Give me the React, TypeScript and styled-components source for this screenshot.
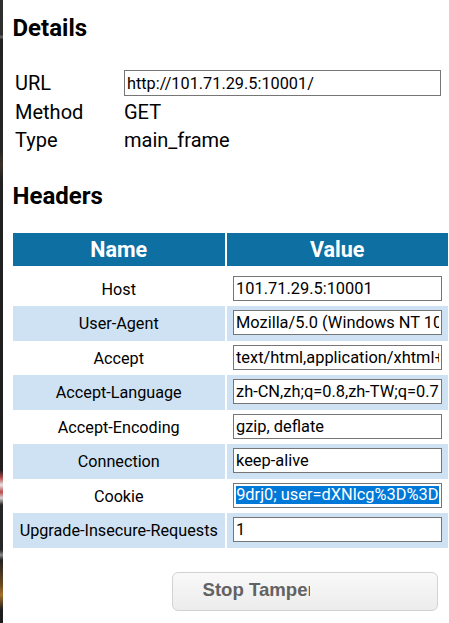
import React from "react";
import styled, { createGlobalStyle } from "styled-components";

const GlobalStyle = createGlobalStyle`
  html, body {
    margin: 0;
    padding: 0;
    background: #ffffff;
    overflow: hidden;
  }
  body {
    font-family: Roboto, "Noto Sans", Arial, sans-serif;
    color: #000;
  }
`;

const Page = styled.div`
  display: flex;
  width: 449px;
  min-height: 623px;
`;

const Edge = styled.div`
  flex: 0 0 3px;
  align-self: stretch;
  background: linear-gradient(
    180deg,
    #2e2e2e 0px,
    #2e2e2e 35px,
    #5a5a5a 36px,
    #5a5a5a 38px,
    #222 39px,
    #262626 150px,
    #3a3128 165px,
    #222 180px,
    #1d1d1d 470px,
    #b84a4a 478px,
    #e9e3e3 485px,
    #b84a4a 492px,
    #d8d2d2 498px,
    #262626 505px,
    #262626 550px,
    #8a8a8a 555px,
    #222 560px,
    #6a4a20 585px,
    #a2702a 595px,
    #1d1d1d 610px
  );
`;

const Content = styled.div`
  flex: 1;
  min-width: 0;
  padding: 14px 8px 0 8px;
`;

const Title = styled.h2<{ $after: number }>`
  margin: 0 0 ${(p) => p.$after}px 0;
  padding-left: 1.5px;
  font-size: 24px;
  line-height: 28px;
  font-weight: 700;
  color: #000;
`;

const DetailsGrid = styled.div`
  display: grid;
  grid-template-columns: 109px 1fr;
  grid-auto-rows: 26.5px;
  row-gap: 2px;
  align-items: center;
  margin: 0 0 28px 4px;
  font-size: 20px;
`;

const DetailLabel = styled.div`
  color: #000;
`;

const DetailValue = styled.div`
  color: #000;
  min-width: 0;
`;

const UrlInput = styled.input`
  display: block;
  box-sizing: border-box;
  width: 100%;
  height: 26px;
  margin: 0;
  padding: 1px 2px;
  border: 1px solid #767676;
  border-radius: 0;
  font-family: Roboto, "Noto Sans", Arial, sans-serif;
  font-size: 16.3px;
  color: #000;
  background: #fff;
  outline: none;
`;

const HeaderTable = styled.div`
  width: 435px;
  margin-left: 2px;
`;

const HeaderRow = styled.div`
  display: grid;
  grid-template-columns: 211.5px 221.5px;
  column-gap: 2px;
  margin-bottom: 6.3px;
`;

const HeadCell = styled.div`
  height: 32.5px;
  display: flex;
  align-items: center;
  justify-content: center;
  background: #0e6fa3;
  color: #fff;
  font-size: 21.5px;
  font-weight: 700;
`;

const BodyRow = styled.div`
  display: grid;
  grid-template-columns: 211.5px 221.5px;
  column-gap: 2px;
  height: 34.5px;
`;

const NameCell = styled.div<{ $shade: boolean }>`
  display: flex;
  align-items: center;
  justify-content: center;
  background: ${(p) => (p.$shade ? "#cfe2f3" : "transparent")};
  font-size: 16.2px;
  color: #000;
  white-space: nowrap;
`;

const ValueCell = styled.div<{ $shade: boolean }>`
  display: flex;
  align-items: center;
  box-sizing: border-box;
  padding: 0 6.5px 2px 6.5px;
  background: ${(p) => (p.$shade ? "#cfe2f3" : "transparent")};
  min-width: 0;
`;

const ValueInput = styled.input`
  display: block;
  box-sizing: border-box;
  width: 100%;
  height: 25px;
  margin: 0;
  padding: 1px 2px;
  border: 1px solid #767676;
  border-radius: 0;
  font-family: Roboto, "Noto Sans", Arial, sans-serif;
  font-size: 16.4px;
  color: #000;
  background: #fff;
  outline: none;
`;

const SelectedBox = styled.div`
  display: flex;
  align-items: center;
  box-sizing: border-box;
  width: 100%;
  height: 25px;
  padding: 1px 2px;
  border: 1px solid #767676;
  background: #fff;
  overflow: hidden;
`;

const Selection = styled.span`
  flex: 1;
  min-width: 0;
  text-align: right;
  white-space: nowrap;
  overflow: hidden;
  background: #0078d7;
  color: #fff;
  font-size: 16.4px;
  line-height: 18px;
`;

const ButtonRow = styled.div`
  display: flex;
  justify-content: flex-end;
  margin-top: 24.5px;
  padding-right: 3px;
`;

const StopButton = styled.button`
  display: flex;
  align-items: center;
  box-sizing: border-box;
  width: 266px;
  height: 38.5px;
  margin: 0;
  padding: 0 0 3px 29.5px;
  border: 1px solid #d2d2d2;
  border-radius: 6px;
  background: linear-gradient(180deg, #f9f9f9 0%, #ececec 100%);
  font-family: "Liberation Sans", Arial, sans-serif;
  font-size: 18.6px;
  font-weight: 700;
  line-height: 20px;
  color: #626262;
  cursor: pointer;
`;

const ButtonLabel = styled.span`
  display: inline-block;
  width: 107.5px;
  overflow: hidden;
  white-space: nowrap;
`;

type Header = { name: string; value: string; selected?: boolean };

const headers: Header[] = [
  { name: "Host", value: "101.71.29.5:10001" },
  {
    name: "User-Agent",
    value:
      "Mozilla/5.0 (Windows NT 10.0; Win64; x64; rv:56.0) Gecko/20100101 Firefox/56.0",
  },
  {
    name: "Accept",
    value: "text/html,application/xhtml+xml,application/xml;q=0.9,*/*;q=0.8",
  },
  {
    name: "Accept-Language",
    value: "zh-CN,zh;q=0.8,zh-TW;q=0.7,zh-HK;q=0.5,en-US;q=0.3,en;q=0.2",
  },
  { name: "Accept-Encoding", value: "gzip, deflate" },
  { name: "Connection", value: "keep-alive" },
  {
    name: "Cookie",
    value: "9drj0; user=dXNlcg%3D%3D",
    selected: true,
  },
  { name: "Upgrade-Insecure-Requests", value: "1" },
];

export default function App() {
  return (
    <>
      <GlobalStyle />
      <Page>
        <Edge />
        <Content>
          <Title $after={28}>Details</Title>
          <DetailsGrid>
            <DetailLabel>URL</DetailLabel>
            <DetailValue>
              <UrlInput defaultValue="http://101.71.29.5:10001/" />
            </DetailValue>
            <DetailLabel>Method</DetailLabel>
            <DetailValue>GET</DetailValue>
            <DetailLabel>Type</DetailLabel>
            <DetailValue>main_frame</DetailValue>
          </DetailsGrid>

          <Title $after={23.7}>Headers</Title>
          <HeaderTable>
            <HeaderRow>
              <HeadCell>Name</HeadCell>
              <HeadCell>Value</HeadCell>
            </HeaderRow>
            {headers.map((h, i) => {
              const shade = i % 2 === 1;
              return (
                <BodyRow key={h.name}>
                  <NameCell $shade={shade}>{h.name}</NameCell>
                  <ValueCell $shade={shade}>
                    {h.selected ? (
                      <SelectedBox>
                        <Selection>{h.value}</Selection>
                      </SelectedBox>
                    ) : (
                      <ValueInput defaultValue={h.value} />
                    )}
                  </ValueCell>
                </BodyRow>
              );
            })}
          </HeaderTable>

          <ButtonRow>
            <StopButton type="button">
              <ButtonLabel>Stop Tamper</ButtonLabel>
            </StopButton>
          </ButtonRow>
        </Content>
      </Page>
    </>
  );
}
